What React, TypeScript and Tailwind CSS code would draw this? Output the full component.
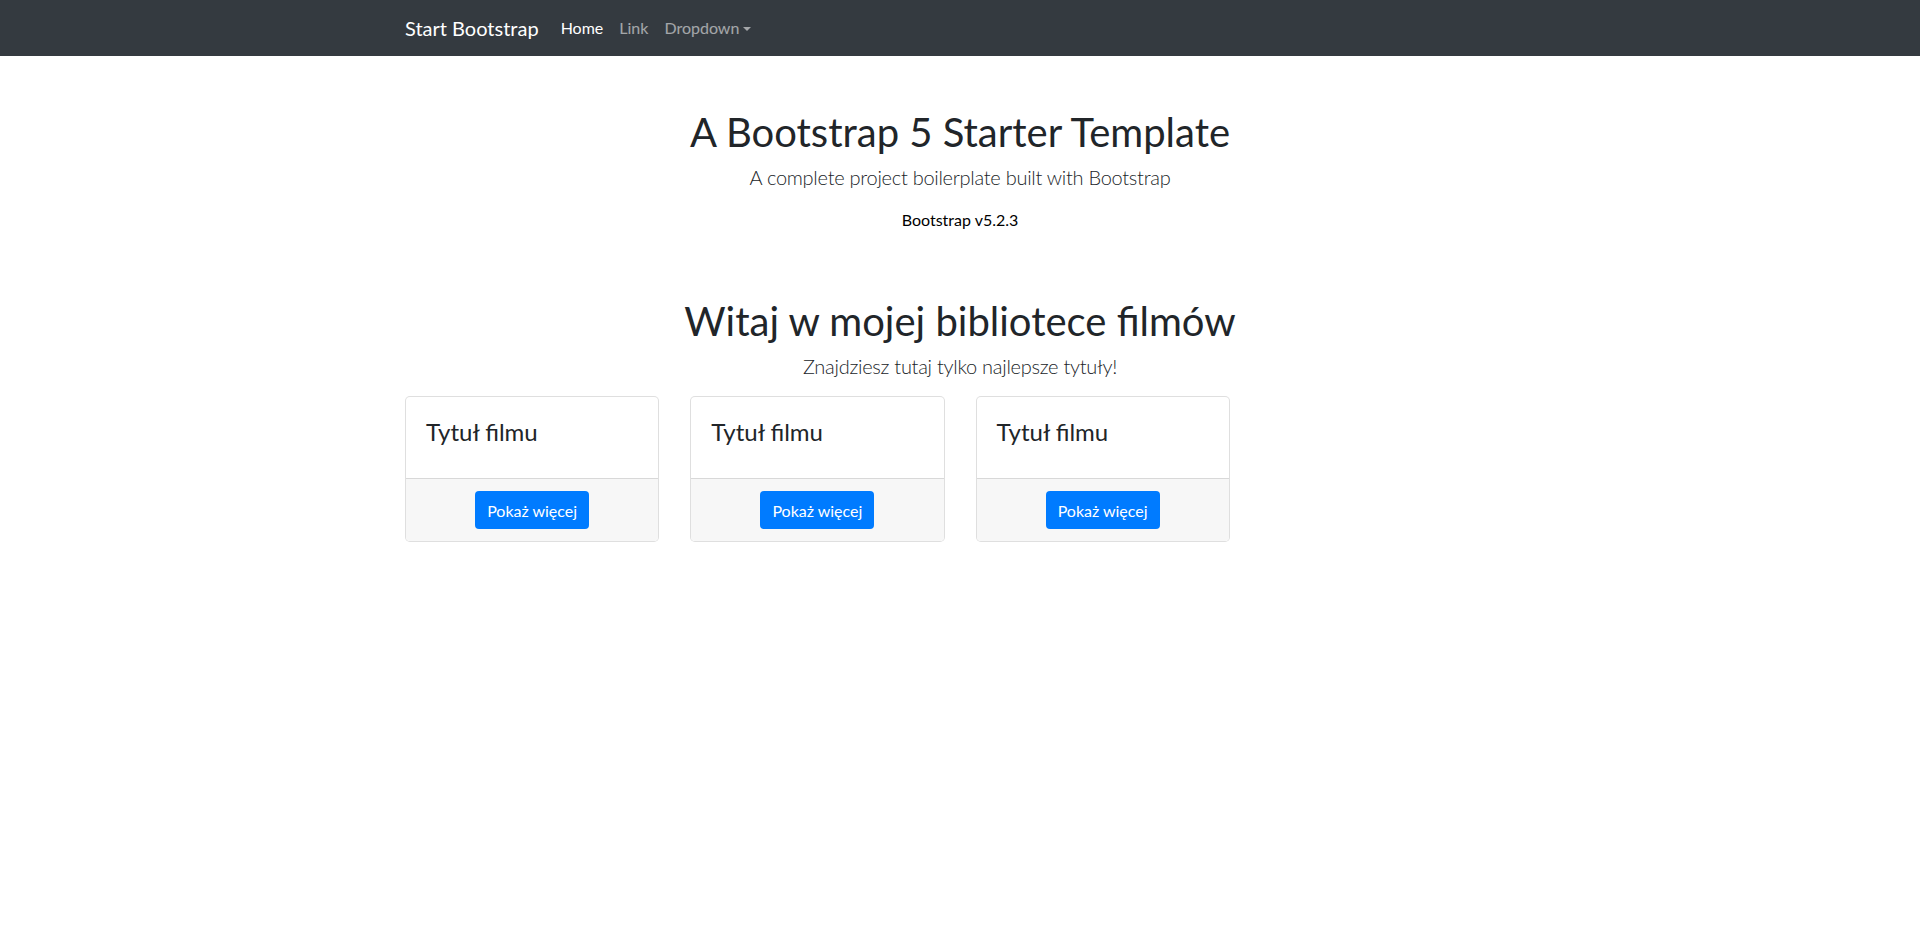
import React from 'react';

const font = { fontFamily: 'Lato, "Noto Sans", sans-serif' };

const NavBar: React.FC = () => (
  <nav className="h-14 bg-[#343a40] flex items-center">
    <div className="w-[1110px] mx-auto flex items-center">
      <a className="text-[20px] leading-[1.2] text-white mr-[14px]">Start Bootstrap</a>
      <ul className="flex items-center text-[16px] leading-[1.2]">
        <li className="px-2 text-white">Home</li>
        <li className="px-2 text-white/55">Link</li>
        <li className="px-2 text-white/55 flex items-center">
          Dropdown
          <span className="ml-[4px] mt-[1px] w-0 h-0 border-l-[4px] border-r-[4px] border-t-[4px] border-l-transparent border-r-transparent border-t-white/55" />
        </li>
      </ul>
    </div>
  </nav>
);

const MovieCard: React.FC<{ title: string }> = ({ title }) => (
  <div className="border border-black/[0.125] rounded-[5px] overflow-hidden bg-white">
    <div className="px-5 pt-[20px] pb-[32px]">
      <h4 className="text-[24px] leading-[29px] text-[#212529]">{title}</h4>
    </div>
    <div className="border-t border-black/[0.125] bg-[#f7f7f7] py-3 flex justify-center">
      <button className="h-[38px] px-3 rounded-[4px] bg-[#007bff] text-white text-[16px] leading-[1.2]">
        Pokaż więcej
      </button>
    </div>
  </div>
);

export default function App() {
  return (
    <div className="min-h-[947px] bg-white text-[#212529]" style={font}>
      <NavBar />
      <main className="w-[1110px] mx-auto">
        <div className="text-center pt-[52px]">
          <h1 className="text-[40px] leading-[1.2]">A Bootstrap 5 Starter Template</h1>
          <p className="mt-[9px] text-[20px] leading-[1.2] font-light tracking-[-0.27px] text-[#212529]">
            A complete project boilerplate built with Bootstrap
          </p>
          <p className="mt-[21px] text-[16px] leading-[1.2] text-black">Bootstrap v5.2.3</p>
        </div>
        <div className="text-center mt-[68px]">
          <h1 className="text-[40px] leading-[1.2]">Witaj w mojej bibliotece filmów</h1>
          <p className="mt-[9px] text-[20px] leading-[1.2] font-light tracking-[-0.27px] text-[#212529]">
            Znajdziesz tutaj tylko najlepsze tytuły!
          </p>
        </div>
        <div className="grid grid-cols-4 gap-[31px] mt-[18px]">
          <MovieCard title="Tytuł filmu" />
          <MovieCard title="Tytuł filmu" />
          <MovieCard title="Tytuł filmu" />
        </div>
      </main>
    </div>
  );
}
